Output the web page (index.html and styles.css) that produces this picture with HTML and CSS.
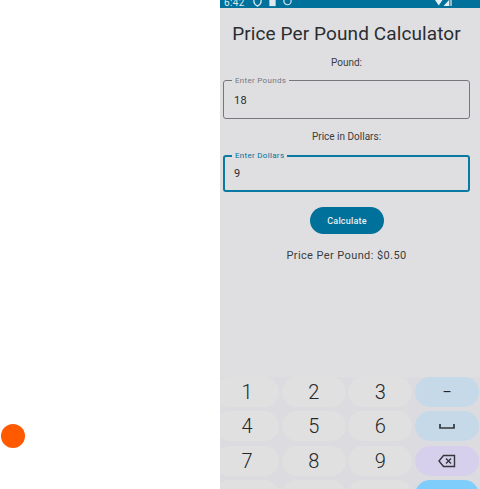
FILE: index.html
```html
<!DOCTYPE html>
<html lang="en">
<head>
  <meta charset="UTF-8">
  <title>Price Per Pound Calculator</title>
  <link rel="stylesheet" href="styles.css">
</head>
<body>
  <div class="desk">
    <div class="dot"></div>
  </div>
  <div class="phone">
    <div class="status">
      <span class="time">6:42</span>
      <svg class="status-icon" viewBox="0 0 10 10"><path d="M1 0h8v4q0 3-4 5q-4-2-4-5z" fill="none" stroke="#dfe9ee" stroke-width="1.4"/></svg>
      <svg class="status-icon" viewBox="0 0 10 10"><rect x="1.5" y="0" width="7" height="9" fill="#dfe9ee"/></svg>
      <svg class="status-icon" viewBox="0 0 10 10"><circle cx="5" cy="3.5" r="4" fill="none" stroke="#dfe9ee" stroke-width="1.3"/></svg>
      <span class="status-gap"></span>
      <svg class="signal" viewBox="0 0 18 8"><path d="M0 0h7.500L3.750 5.500zM14 0v6H8.500z" fill="#e6eff3"/><path d="M14.500 0h2.500v6h-2.500z" fill="#8fbccd"/></svg>
    </div>

    <div class="content">
      <h1>Price Per Pound Calculator</h1>

      <p class="caption caption-first">Pound:</p>
      <fieldset class="field field-first">
        <legend>Enter Pounds</legend>
        <div class="value">18</div>
      </fieldset>

      <p class="caption">Price in Dollars:</p>
      <fieldset class="field field-active">
        <legend>Enter Dollars</legend>
        <div class="value">9</div>
      </fieldset>

      <button class="calc">Calculate</button>
      <p class="result">Price Per Pound: $0.50</p>
    </div>

    <div class="keyboard">
      <div class="key">1</div>
      <div class="key">2</div>
      <div class="key">3</div>
      <div class="key key-blue key-small">–</div>
      <div class="key">4</div>
      <div class="key">5</div>
      <div class="key">6</div>
      <div class="key key-blue">
        <svg class="key-icon" viewBox="0 0 18 14"><path d="M2 5v4h14V5" fill="none" stroke="#33363b" stroke-width="1.7"/></svg>
      </div>
      <div class="key">7</div>
      <div class="key">8</div>
      <div class="key">9</div>
      <div class="key key-purple">
        <svg class="key-icon" viewBox="0 0 18 14"><path d="M5.500 1.500H16.500V12.500H5.500L1 7z" fill="none" stroke="#33363b" stroke-width="1.400"/><path d="M8 4.500l5 5M13 4.500l-5 5" stroke="#33363b" stroke-width="1.400"/></svg>
      </div>
      <div class="key"></div>
      <div class="key"></div>
      <div class="key"></div>
      <div class="key key-action"></div>
    </div>
  </div>
</body>
</html>
```

FILE: styles.css
```css
* {
  box-sizing: border-box;
}
html, body {
  height: 100%;
}
body {
  margin: 0;
  display: flex;
  height: 489px;
  overflow: hidden;
  background: #fff;
  font-family: Roboto, sans-serif;
  color: #2b2d31;
}
.desk {
  width: 220px;
  padding: 424px 0 0 1px;
}
.dot {
  width: 24px;
  height: 24px;
  border-radius: 50%;
  background: #ff5a00;
}
.phone {
  width: 260px;
  height: 489px;
  overflow: hidden;
  display: flex;
  flex-direction: column;
  background: #dfdfe2;
}
.status {
  height: 8px;
  flex: none;
  overflow: hidden;
  display: flex;
  align-items: flex-end;
  gap: 6px;
  padding-left: 4px;
  background: #00719b;
  color: #dfe9ee;
  font-size: 10px;
  line-height: 8px;
}
.time {
  position: relative;
  top: -1px;
  margin-right: 2px;
  letter-spacing: 0.4px;
}
.status-icon {
  width: 9px;
  height: 9px;
  flex: none;
  margin-bottom: 1px;
}
.status-gap {
  flex: 1;
}
.signal {
  width: 18px;
  height: 8px;
  flex: none;
  margin-right: 27px;
}
.content {
  flex: 1;
  padding: 0 10px 0 3px;
  text-align: center;
}
h1 {
  margin: 14px 0 0;
  font-size: 19px;
  font-weight: 400;
  line-height: 24px;
  letter-spacing: 0.1px;
  white-space: nowrap;
}
.caption {
  margin: 12px 0 0;
  font-size: 10px;
  line-height: 12px;
  color: #3a3c40;
}
.caption-first {
  margin-top: 11px;
}
.field {
  margin: 8px 0 0;
  padding: 0 10px;
  height: 43px;
  border: 1px solid #74787d;
  border-radius: 3px;
  text-align: left;
}
.field-first {
  margin-top: 7px;
}
.field legend {
  padding: 0 3px;
  margin-left: -2px;
  font-size: 8px;
  line-height: 9px;
  letter-spacing: 0.3px;
  color: #74777c;
}
.value {
  margin-top: 8px;
  font-size: 11px;
  line-height: 16px;
  letter-spacing: 0.4px;
}
.field-active {
  height: 41px;
  border: 2px solid #0a7aa3;
  padding: 0 9px;
}
.field-active legend {
  color: #00719b;
}
.field-active .value {
  margin-top: 6px;
}
.calc {
  display: block;
  width: 74px;
  height: 27px;
  margin: 15px 0 0 87px;
  padding: 0;
  border: 0;
  border-radius: 14px;
  background: #00719b;
  color: #e8f0f4;
  font-family: Roboto, sans-serif;
  font-size: 9px;
  font-weight: 500;
  letter-spacing: 0.2px;
}
.result {
  margin: 15px 0 0;
  font-size: 11px;
  line-height: 14px;
  letter-spacing: 0.4px;
  color: #3a3c40;
}
.keyboard {
  flex: none;
  height: 112px;
  margin-left: -5px;
  display: grid;
  grid-template-columns: repeat(4, 64px);
  grid-auto-rows: 30px;
  gap: 4.3px 2.7px;
  background: #dcdce0;
}
.key {
  display: flex;
  align-items: center;
  justify-content: center;
  border-radius: 15px;
  background: #e0e0e0;
  font-size: 20px;
  font-weight: 300;
  color: #24262a;
}
.key-small {
  font-size: 14px;
  font-weight: 400;
}
.key-blue {
  background: #c5d9e8;
}
.key-purple {
  background: #d6d0ec;
}
.key-action {
  background: #7fcdfb;
}
.key-icon {
  width: 18px;
  height: 14px;
}
```
